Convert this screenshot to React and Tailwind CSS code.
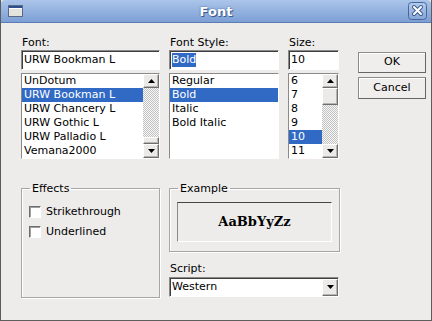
import React from 'react'

const sunken =
  'border border-t-[#8a8a8a] border-l-[#8a8a8a] border-b-white border-r-white shadow-[inset_1px_1px_0_#3e3e3e]'
const raised =
  'border border-t-white border-l-white border-b-[#6e6e6e] border-r-[#6e6e6e] bg-[#ebeae8] shadow-[inset_-1px_-1px_0_#b5b5b5]'
const trough =
  'bg-[repeating-conic-gradient(#c2c2c2_0%_25%,#f6f6f6_0%_50%)] bg-[length:2px_2px]'

function Arrow({ dir = 'down' }) {
  return (
    <svg width="7" height="4" viewBox="0 0 7 4">
      {dir === 'up' ? (
        <path d="M0 4 L3.5 0 L7 4 Z" fill="#000" />
      ) : (
        <path d="M0 0 L7 0 L3.5 4 Z" fill="#000" />
      )}
    </svg>
  )
}

function ArrowButton({ dir }) {
  return (
    <div className={`h-[14px] flex items-center justify-center ${raised}`}>
      <Arrow dir={dir} />
    </div>
  )
}

function ListItems({ items, selected }) {
  return (
    <div className="flex-1 flex flex-col bg-white overflow-hidden">
      {items.map((it) => (
        <div
          key={it}
          className={`h-[14px] leading-[14px] pl-[2px] whitespace-nowrap ${
            it === selected ? 'bg-[#316ac5] text-white' : ''
          }`}
        >
          {it}
        </div>
      ))}
    </div>
  )
}

function Label({ children }) {
  return <div className="h-[13px] leading-[13px] pl-[1px]">{children}</div>
}

function Edit({ children }) {
  return (
    <div className={`mt-[1px] h-[20px] bg-white flex items-center px-[2px] ${sunken}`}>
      {children}
    </div>
  )
}

export default function App() {
  return (
    <div className="w-[432px] h-[321px] bg-[#edeceb] border-x border-b border-[#5c5c5c] flex flex-col font-['DejaVu_Sans',sans-serif] text-[11px] text-black overflow-hidden">
      {/* title bar */}
      <div className="h-[23px] shrink-0 grid grid-cols-[1fr_auto_1fr] items-center bg-gradient-to-b from-[#abc5ea] to-[#7c9fd4] border-b border-[#5b7db4] rounded-t-[4px]">
        <div className="pl-[7px] flex items-center">
          <svg width="15" height="12" viewBox="0 0 15 12">
            <rect x="0.5" y="0.5" width="14" height="11" fill="#e4e4de" stroke="#5a6b88" />
            <rect x="1" y="1" width="13" height="2" fill="#2f4f8e" />
            <rect x="1" y="3" width="13" height="1" fill="#fff" />
          </svg>
        </div>
        <div className="font-bold text-[13px] text-white leading-none [text-shadow:0_0_2px_#3d5c90,1px_1px_0_#3d5c90]">
          Font
        </div>
        <div className="flex justify-end pr-[4px]">
          <svg width="19" height="18" viewBox="0 0 19 18">
            <defs>
              <linearGradient id="cb" x1="0" y1="0" x2="0" y2="1">
                <stop offset="0" stopColor="#b3cbed" />
                <stop offset="1" stopColor="#85a5d6" />
              </linearGradient>
            </defs>
            <rect x="0.5" y="0.5" width="18" height="17" rx="3" fill="url(#cb)" stroke="#4a6699" />
            <path d="M6 5 L13 12 M13 5 L6 12" stroke="#3f5c8e" strokeWidth="4" strokeLinecap="round" />
            <path d="M6 5 L13 12 M13 5 L6 12" stroke="#fff" strokeWidth="2" strokeLinecap="round" />
          </svg>
        </div>
      </div>

      {/* body */}
      <div className="flex-1 pl-[20px] pt-[13px]">
        <div className="flex">
          {/* font */}
          <div className="w-[139px] flex flex-col">
            <Label>Font:</Label>
            <Edit>URW Bookman L</Edit>
            <div className={`mt-[3px] h-[86px] flex bg-white ${sunken}`}>
              <ListItems
                items={['UnDotum', 'URW Bookman L', 'URW Chancery L', 'URW Gothic L', 'URW Palladio L', 'Vemana2000']}
                selected="URW Bookman L"
              />
              <div className="w-[16px] flex flex-col">
                <ArrowButton dir="up" />
                <div className={`flex-1 ${trough}`} />
                <div className={`h-[7px] ${raised}`} />
                <ArrowButton dir="down" />
              </div>
            </div>
          </div>

          {/* font style */}
          <div className="ml-[9px] w-[110px] flex flex-col">
            <Label>Font Style:</Label>
            <Edit>
              <span className="bg-[#316ac5] text-white leading-[14px]">Bold</span>
            </Edit>
            <div className={`mt-[3px] h-[86px] flex bg-white ${sunken}`}>
              <ListItems items={['Regular', 'Bold', 'Italic', 'Bold Italic']} selected="Bold" />
            </div>
          </div>

          {/* size */}
          <div className="ml-[9px] w-[51px] flex flex-col">
            <Label>Size:</Label>
            <Edit>10</Edit>
            <div className={`mt-[3px] h-[86px] flex bg-white ${sunken}`}>
              <ListItems items={['6', '7', '8', '9', '10', '11']} selected="10" />
              <div className="w-[16px] flex flex-col">
                <ArrowButton dir="up" />
                <div className={`h-[17px] ${raised}`} />
                <div className={`flex-1 ${trough}`} />
                <ArrowButton dir="down" />
              </div>
            </div>
          </div>

          {/* buttons */}
          <div className="ml-[19px] w-[68px] flex flex-col">
            <div className="mt-[16px] h-[21px] flex items-center justify-center border border-[#8c8c8c] border-b-[#656565] border-r-[#656565] bg-[#efeeec] shadow-[inset_1px_1px_0_#fff]">
              OK
            </div>
            <div className="mt-[4px] h-[22px] flex items-center justify-center border border-[#8c8c8c] border-b-[#656565] border-r-[#656565] bg-[#efeeec] shadow-[inset_1px_1px_0_#fff]">
              Cancel
            </div>
          </div>
        </div>

        {/* bottom */}
        <div className="flex mt-[23px]">
          <fieldset className="w-[139px] h-[116px] border border-[#a6a6a6] shadow-[inset_1px_1px_0_#fff,1px_1px_0_#fff]">
            <legend className="ml-[8px] px-[2px] leading-[13px]">Effects</legend>
            <div className="pl-[7px] mt-[10px] flex flex-col gap-[7px]">
              {['Strikethrough', 'Underlined'].map((t) => (
                <div key={t} className="h-[13px] flex items-center gap-[5px]">
                  <div className="w-[12px] h-[12px] bg-white border border-t-[#6e6e6e] border-l-[#6e6e6e] border-b-white border-r-white shadow-[inset_1px_1px_0_#a0a0a0]" />
                  <span className="leading-[13px]">{t}</span>
                </div>
              ))}
            </div>
          </fieldset>

          <div className="ml-[9px] w-[171px] flex flex-col">
            <fieldset className="h-[70px] border border-[#a6a6a6] shadow-[inset_1px_1px_0_#fff,1px_1px_0_#fff]">
              <legend className="ml-[8px] px-[2px] leading-[13px]">Example</legend>
              <div className="ml-[7px] mt-[7px] w-[155px] h-[40px] flex items-center justify-center border border-t-[#454545] border-l-[#8a8a8a] border-b-white border-r-white font-['DejaVu_Serif',serif] font-bold text-[13px]">
                AaBbYyZz
              </div>
            </fieldset>
            <div className="mt-[10px]">
              <Label>Script:</Label>
            </div>
            <div className={`mt-[2px] w-[170px] h-[20px] bg-white flex items-center ${sunken}`}>
              <span className="flex-1 pl-[2px]">Western</span>
              <div className={`w-[16px] h-[17px] flex items-center justify-center ${raised}`}>
                <Arrow dir="down" />
              </div>
            </div>
          </div>
        </div>
      </div>
    </div>
  )
}
